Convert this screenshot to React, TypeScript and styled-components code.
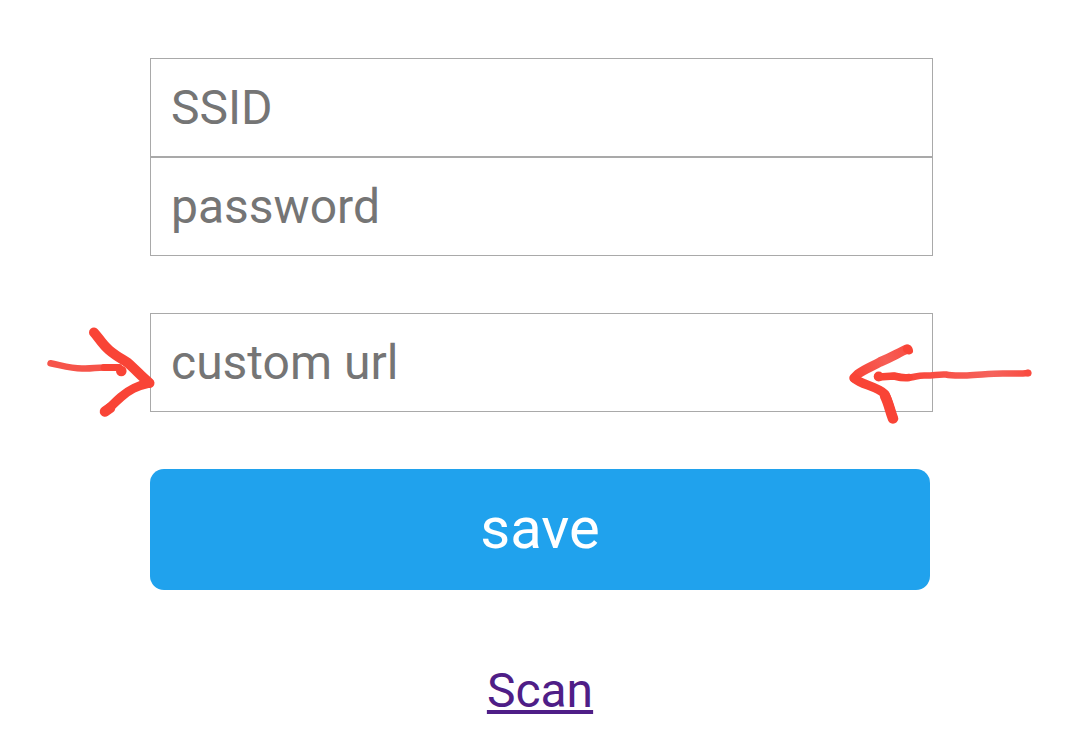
import React from 'react';
import styled, { createGlobalStyle } from 'styled-components';

const GlobalStyle = createGlobalStyle`
  *, *::before, *::after { box-sizing: border-box; }
  body {
    margin: 0;
    background: #fff;
    font-family: Roboto, sans-serif;
    overflow-x: hidden;
  }
`;

const Page = styled.main`
  padding: 58px 149px 24px 150px;
`;

const Form = styled.form`
  display: flex;
  flex-direction: column;
`;

const Field = styled.div<{ $spaced?: boolean }>`
  position: relative;
  margin-top: ${({ $spaced }) => ($spaced ? 57 : 0)}px;
  margin-right: -3px;
`;

const TextInput = styled.input`
  display: block;
  width: 100%;
  height: 99px;
  padding: 0 20px;
  border: 1px solid #a9a9a9;
  border-radius: 0;
  background: #fff;
  color: #222;
  font: 400 48px/56px Roboto, sans-serif;
  outline: none;

  &::placeholder {
    color: #757575;
    opacity: 1;
  }
`;

const SaveButton = styled.button`
  height: 121px;
  margin-top: 57px;
  padding: 0 0 4px;
  border: 0;
  border-radius: 14px;
  background: #20a2ed;
  color: #fff;
  font: 400 58px/68px Roboto, sans-serif;
  cursor: pointer;
`;

const LinkRow = styled.nav`
  margin-top: 73px;
  text-align: center;
  font-size: 48px;
  line-height: 56px;
`;

const ScanLink = styled.a`
  color: #4f1e87;
`;

const Arrow = styled.svg<{ $side: 'left' | 'right' }>`
  position: absolute;
  top: 7px;
  ${({ $side }) => ($side === 'left' ? 'left: -110px;' : 'right: -107px;')}
  fill: none;
  stroke: #f94436;
  stroke-linecap: round;
  stroke-linejoin: round;
  pointer-events: none;
`;

const LeftArrow = () => (
  <Arrow $side="left" width="120" height="100" viewBox="0 0 120 100" aria-hidden="true">
    <path
      d="M10.500 43.300C20 45 30 48.500 42 48.500C52 49 55 47.500 64 47.500L79 47.500"
      stroke="#f6544a"
      strokeWidth="6.500"
    />
    <path d="M64 47.500L79 47.500L81.500 51" strokeWidth="7" />
    <circle cx="81.300" cy="51" r="5.300" fill="#f94436" stroke="none" />
    <path d="M54 12.500C59 18 62 24 69 30C76 36 82 39 88 43C96 50 101 56 109.500 63" strokeWidth="10" />
    <path d="M109.500 63C96 66 89 70 81 77C74 83 70 88 65 91.500" strokeWidth="9" />
    <path d="M65 91.500L70 88" strokeWidth="10.500" />
  </Arrow>
);

const RightArrow = () => (
  <Arrow $side="right" width="200" height="110" viewBox="0 0 200 110" aria-hidden="true">
    <defs>
      <linearGradient id="barb" gradientUnits="userSpaceOnUse" x1="14" y1="58" x2="73" y2="29">
        <stop offset="0" stopColor="#f94436" />
        <stop offset="0.550" stopColor="#f65d55" />
        <stop offset="1" stopColor="#f94c40" />
      </linearGradient>
      <linearGradient id="shaft" gradientUnits="userSpaceOnUse" x1="39" y1="55" x2="190" y2="55">
        <stop offset="0" stopColor="#f94436" />
        <stop offset="0.300" stopColor="#f94b40" />
        <stop offset="0.750" stopColor="#f5635c" />
        <stop offset="1" stopColor="#f94c40" />
      </linearGradient>
    </defs>
    <path d="M14 58L18 54C25 49 33 46 40 42C52 37 58 33 67 29" stroke="url(#barb)" strokeWidth="9.500" />
    <path d="M67 29H68.500L69 30.500" strokeWidth="8" />
    <path d="M14.500 58.500C22 65 36 66 45 74C48 80 50 89 53 98.500" strokeWidth="9" />
    <path d="M45 76C49 84 50 91 53 98.500" strokeWidth="10.500" />
    <path
      d="M40 56.500C46 57.500 49 55.500 54 56C60 57 64 58.500 70 57.500C76 57 78 55 86 55.500C94 55.500 99 54 106 54.500C112 56 119 55.500 127 55.500C140 55 150 53.500 163 53.500C172 53.500 180 54 188 53"
      stroke="url(#shaft)"
      strokeWidth="6.500"
    />
    <path d="M39 57L54 56C60 57.500 64 58.500 69 57.500" strokeWidth="7.500" />
    <circle cx="38.700" cy="56.500" r="5" fill="#f94436" stroke="none" />
    <circle cx="188" cy="53" r="3.500" fill="#f94c40" stroke="none" />
  </Arrow>
);

export default function App() {
  return (
    <>
      <GlobalStyle />
      <Page>
        <Form onSubmit={(event) => event.preventDefault()}>
          <Field>
            <TextInput type="text" name="ssid" placeholder="SSID" aria-label="SSID" />
          </Field>
          <Field>
            <TextInput type="password" name="password" placeholder="password" aria-label="password" />
          </Field>
          <Field $spaced>
            <TextInput type="text" name="url" placeholder="custom url" aria-label="custom url" />
            <LeftArrow />
            <RightArrow />
          </Field>
          <SaveButton type="submit">save</SaveButton>
        </Form>
        <LinkRow>
          <ScanLink href="#scan">Scan</ScanLink>
        </LinkRow>
      </Page>
    </>
  );
}
